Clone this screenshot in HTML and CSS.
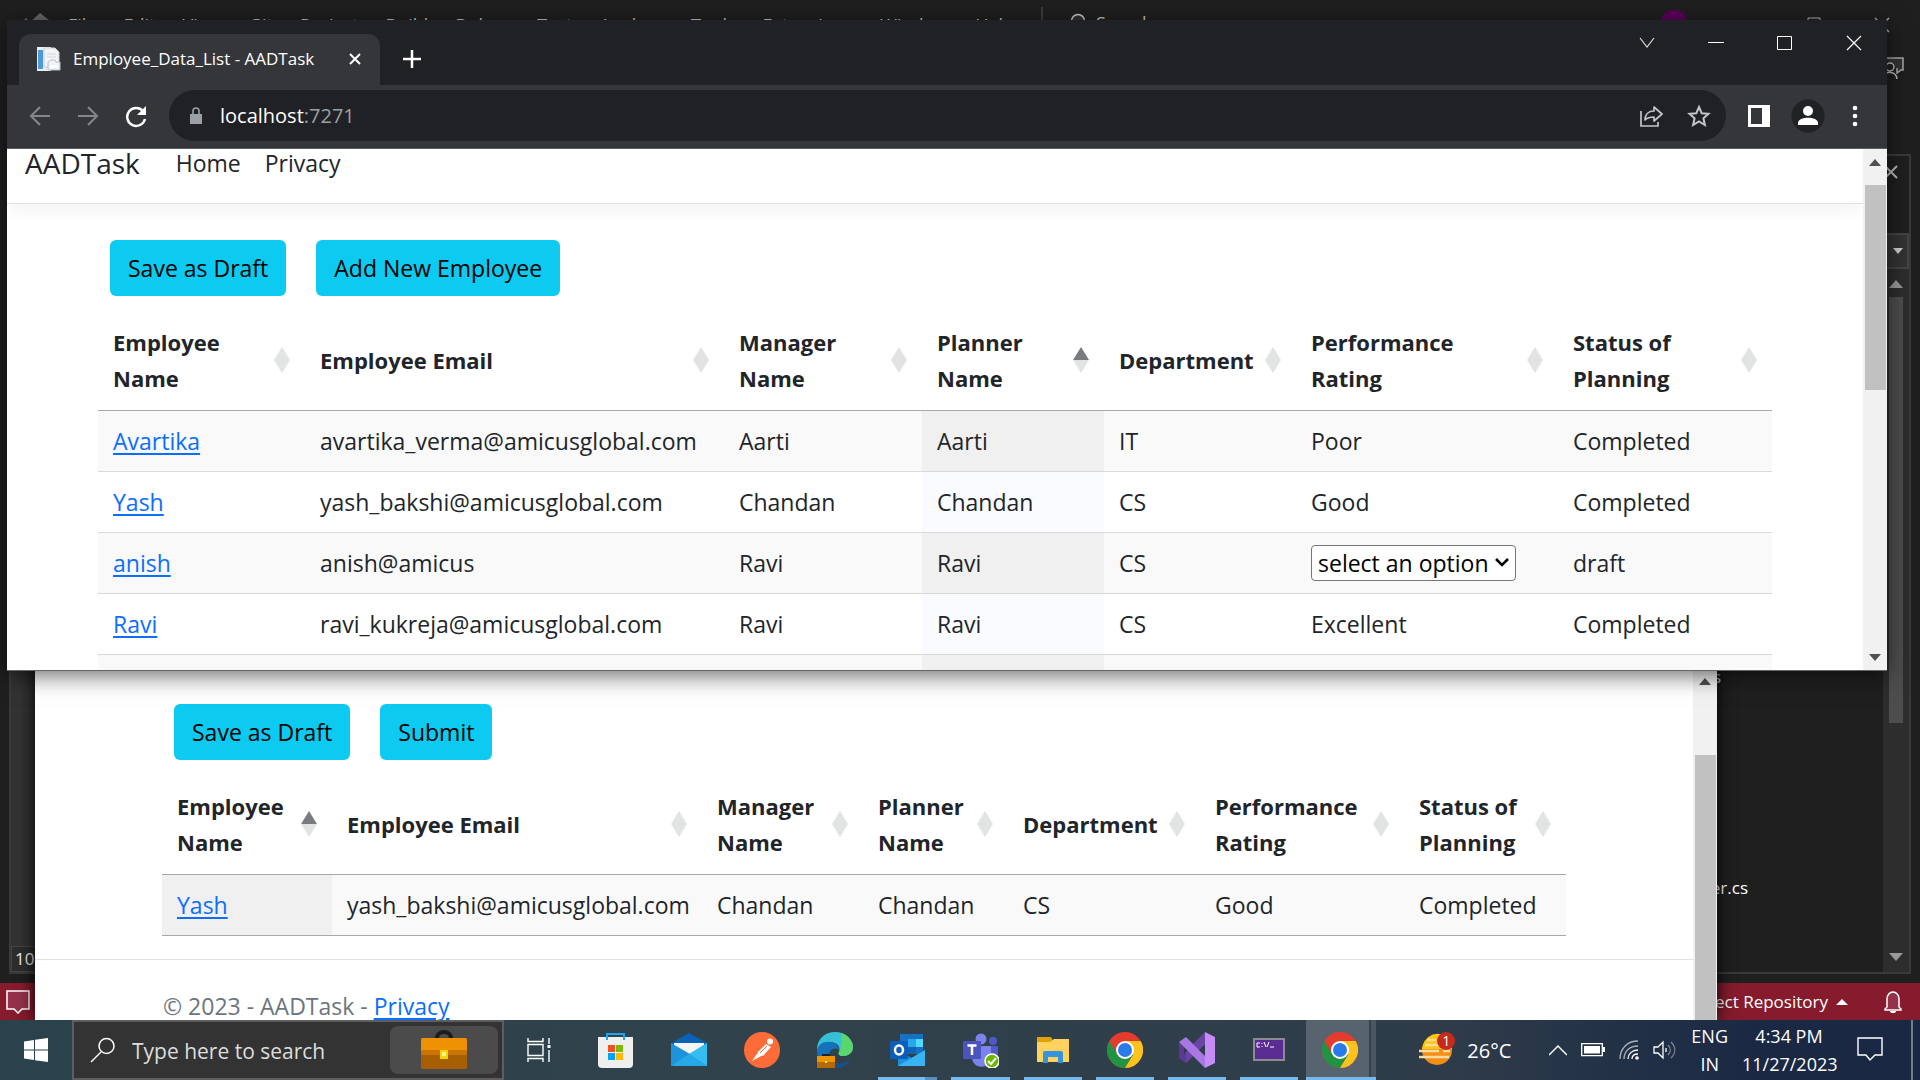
FILE: index.html
```html
<!DOCTYPE html>
<html lang="en">
<head>
<meta charset="utf-8">
<title>Employee_Data_List - AADTask</title>
<link rel="stylesheet" href="styles.css">
</head>
<body>
<div class="desktop">

  <!-- Editor window behind everything -->
  <section class="ide" aria-label="Editor">
    <header class="ide-menu">
      <svg class="ide-logo" width="32" height="24" viewBox="0 0 32 24"><path d="M0 10l6-5 4 4 10-9 9 7v17H0z" fill="#6a6a6a"/></svg>
      <span>File</span><span>Edit</span><span>View</span><span>Git</span><span>Project</span><span>Build</span><span>Debug</span><span>Test</span><span>Analyze</span><span>Tools</span><span>Extensions</span><span>Window</span><span>Help</span>
      <i class="ide-sep"></i>
      <svg class="ide-lens" width="16" height="22" viewBox="0 0 16 22"><circle cx="8" cy="8" r="6.500" fill="#333" stroke="#c8c8c8" stroke-width="1.500"/></svg>
      <span class="ide-search">Search</span>
      <span class="ide-name">AADTask</span>
      <i class="ide-avatar"></i>
      <svg class="ide-max" width="14" height="14" viewBox="0 0 14 14"><path d="M1 1h12v12H1z" fill="none" stroke="#bbb"/></svg>
      <svg class="ide-close" width="16" height="16" viewBox="0 0 16 16"><path d="M1 1l14 14M15 1L1 15" fill="none" stroke="#aaa" stroke-width="1.500"/></svg>
    </header>
    <svg class="ide-feedback" width="24" height="24" viewBox="0 0 24 24"><path d="M3 2h19v12h-2l-4 3v-5" fill="#333" stroke="#aaa" stroke-width="1.500"/><circle cx="9" cy="11" r="4" fill="#222" stroke="#bbb" stroke-width="1.500"/><path d="M2 23c0-9 13-9 14 0" fill="none" stroke="#bbb" stroke-width="1.500"/></svg>
    <div class="ide-body">
      <div class="ide-left"><div class="ide-zoom">102%</div></div>
      <div class="ide-right">
        <div class="ide-files"><span>Controllers</span><span>HomeController.cs</span></div>
        <div class="ide-side">
          <svg class="ide-x" width="16" height="16" viewBox="0 0 16 16"><path d="M2 2l12 12M14 2L2 14" stroke="#bbb" stroke-width="2"/></svg>
          <div class="ide-combo"><svg width="10" height="6" viewBox="0 0 10 6"><path d="M0 0h10L5 6z" fill="#ccc"/></svg></div>
          <div class="ide-scroll">
            <svg width="14" height="8" viewBox="0 0 14 8"><path d="M0 8h14L7 0z" fill="#999"/></svg>
            <i></i>
            <svg width="14" height="8" viewBox="0 0 14 8"><path d="M0 0h14L7 8z" fill="#999"/></svg>
          </div>
        </div>
      </div>
    </div>
    <footer class="ide-status">
      <svg width="24" height="24" viewBox="0 0 24 24"><path d="M1 1h22v18h-7l-4 4-4-4H1z" fill="#93324a" stroke="#fff" stroke-width="1.500"/></svg>
      <span class="ide-repo">Select Repository</span>
      <svg width="12" height="6" viewBox="0 0 12 6"><path d="M0 6h12L6 0z" fill="#fff"/></svg>
      <svg class="ide-bell" width="18" height="22" viewBox="0 0 18 22"><path d="M3 16V8a6 7 0 0 1 12 0v8l2 2v1H1v-1z" fill="#93324a" stroke="#fff" stroke-width="1.500"/><path d="M6 20a3 2 0 0 0 6 0" fill="#fff"/></svg>
    </footer>
  </section>

  <!-- Second browser window -->
  <section class="window back" aria-label="Employee planning">
    <div class="page">
      <main class="content">
        <div class="actions"><button class="btn">Save as Draft</button><button class="btn">Submit</button></div>
        <table class="grid">
          <colgroup><col class="b1"><col class="b2"><col class="b3"><col class="b4"><col class="b5"><col class="b6"><col class="b7"></colgroup>
          <thead><tr>
            <th class="asc"><div>Employee<br>Name<i></i></div></th>
            <th><div>Employee Email<i></i></div></th>
            <th><div>Manager<br>Name<i></i></div></th>
            <th><div>Planner<br>Name<i></i></div></th>
            <th><div>Department<i></i></div></th>
            <th><div>Performance<br>Rating<i></i></div></th>
            <th><div>Status of<br>Planning<i></i></div></th>
          </tr></thead>
          <tbody>
            <tr><td class="sorted"><a href="#yash">Yash</a></td><td>yash_bakshi@amicusglobal.com</td><td>Chandan</td><td>Chandan</td><td>CS</td><td>Good</td><td>Completed</td></tr>
          </tbody>
        </table>
      </main>
      <footer class="footer">© 2023 - AADTask - <a href="#privacy">Privacy</a></footer>
    </div>
    <div class="scrollbar"><i class="up"></i><i class="thumb"></i></div>
  </section>

  <!-- Front browser window -->
  <section class="window front" aria-label="Employee data list">
    <div class="tabs">
      <div class="tab">
        <svg width="24" height="24" viewBox="0 0 24 24"><path d="M0 0h14v24H0z" fill="#e8eef4"/><path d="M1 3h5v19H1z" fill="#4a9bd8"/><path d="M7 1h11l4 4v15H7z" fill="#f4f4f6" stroke="#c9ced4"/><path d="M10 7h9M10 10h9" stroke="#cfd4da"/><path d="M11 15l3-2h4l1 2h4v8H11z" fill="#eef1f5" stroke="#b9c2cc"/><path d="M13 18h8v3h-8z" fill="#fff"/></svg>
        <span>Employee_Data_List - AADTask</span>
        <svg width="14" height="14" viewBox="0 0 14 14"><path d="M2 2l10 10M12 2L2 12" stroke="#fff" stroke-width="2"/></svg>
      </div>
      <svg class="newtab" width="18" height="18" viewBox="0 0 18 18"><path d="M9 0v18M0 9h18" stroke="#fff" stroke-width="2.500"/></svg>
      <div class="controls">
        <svg width="16" height="16" viewBox="0 0 16 16"><path d="M1 3l7 9 7-9" fill="none" stroke="#ddd" stroke-width="1.200"/></svg>
        <svg width="16" height="16" viewBox="0 0 16 16"><path d="M0 7.500h16" stroke="#fff"/></svg>
        <svg width="16" height="16" viewBox="0 0 16 16"><path d="M.5 1.500h14v13H.5z" fill="none" stroke="#fff"/></svg>
        <svg width="16" height="16" viewBox="0 0 16 16"><path d="M1 1l14 14M15 1L1 15" stroke="#fff" stroke-width="1.200"/></svg>
      </div>
    </div>
    <div class="toolbar">
      <svg width="24" height="24" viewBox="0 0 24 24"><path d="M22 12H3M12 3l-9 9 9 9" fill="none" stroke="#85868a" stroke-width="2"/></svg>
      <svg width="24" height="24" viewBox="0 0 24 24"><path d="M2 12h19M12 3l9 9-9 9" fill="none" stroke="#85868a" stroke-width="2"/></svg>
      <svg width="24" height="24" viewBox="0 0 24 24"><path d="M19 7a9 9 0 1 0 2 8" fill="none" stroke="#fff" stroke-width="2.400"/><path d="M22 2v9h-9z" fill="#fff"/></svg>
      <div class="omnibox">
        <svg width="14" height="18" viewBox="0 0 14 18"><path d="M1 7h12v10H1z" fill="#9aa0a6"/><path d="M4 8V4a3 3 0 0 1 6 0v4" fill="none" stroke="#9aa0a6" stroke-width="1.600"/></svg>
        <span class="url">localhost<span>:7271</span></span>
        <svg width="24" height="24" viewBox="0 0 24 24"><path d="M2 7v15h17v-4M2 7" fill="none" stroke="#c4c5c8" stroke-width="1.700"/><path d="M6 16c0-6 4-9 9-9V3l8 7-8 7v-4c-4 0-7 1-9 3z" fill="none" stroke="#c4c5c8" stroke-width="1.700" stroke-linejoin="round"/></svg>
        <svg width="24" height="24" viewBox="0 0 24 24"><path d="M12 3l2.700 6.200 6.800.6-5.100 4.500 1.500 6.700-5.900-3.500L6.100 21l1.500-6.700-5.100-4.500 6.800-.6z" fill="none" stroke="#c4c5c8" stroke-width="2"/></svg>
      </div>
      <svg width="22" height="22" viewBox="0 0 22 22"><path d="M0 0h22v22H0z" fill="#fff"/><path d="M3 3h11v16H3z" fill="#35363a"/></svg>
      <svg class="profile" width="34" height="34" viewBox="0 0 34 34"><circle cx="17" cy="17" r="16.500" fill="#202124"/><circle cx="17" cy="12" r="5" fill="#fff"/><path d="M7 26v-2c0-7 20-7 20 0v2z" fill="#fff"/></svg>
      <svg width="6" height="22" viewBox="0 0 6 22"><g fill="#fff"><circle cx="3" cy="3" r="2.300"/><circle cx="3" cy="11" r="2.300"/><circle cx="3" cy="19" r="2.300"/></g></svg>
    </div>
    <div class="view">
      <div class="page">
        <nav class="nav"><a class="brand" href="#top">AADTask</a><a href="#home">Home</a><a href="#privacy">Privacy</a></nav>
        <main class="content">
          <div class="actions"><button class="btn">Save as Draft</button><button class="btn">Add New Employee</button></div>
          <table class="grid">
            <colgroup><col class="f1"><col class="f2"><col class="f3"><col class="f4"><col class="f5"><col class="f6"><col class="f7"></colgroup>
            <thead><tr>
              <th><div>Employee<br>Name<i></i></div></th>
              <th><div>Employee Email<i></i></div></th>
              <th><div>Manager<br>Name<i></i></div></th>
              <th class="asc"><div>Planner<br>Name<i></i></div></th>
              <th><div>Department<i></i></div></th>
              <th><div>Performance<br>Rating<i></i></div></th>
              <th><div>Status of<br>Planning<i></i></div></th>
            </tr></thead>
            <tbody>
              <tr><td><a href="#avartika">Avartika</a></td><td>avartika_verma@amicusglobal.com</td><td>Aarti</td><td class="sorted">Aarti</td><td>IT</td><td>Poor</td><td>Completed</td></tr>
              <tr><td><a href="#yash">Yash</a></td><td>yash_bakshi@amicusglobal.com</td><td>Chandan</td><td class="sorted">Chandan</td><td>CS</td><td>Good</td><td>Completed</td></tr>
              <tr><td><a href="#anish">anish</a></td><td>anish@amicus</td><td>Ravi</td><td class="sorted">Ravi</td><td>CS</td><td class="pick"><div class="select"><select aria-label="Performance Rating"><option>select an option</option><option>Excellent</option><option>Good</option><option>Poor</option></select><svg width="14" height="10" viewBox="0 0 14 10"><path d="M1 1l6 6 6-6" fill="none" stroke="#000" stroke-width="2.500"/></svg></div></td><td>draft</td></tr>
              <tr><td><a href="#ravi">Ravi</a></td><td>ravi_kukreja@amicusglobal.com</td><td>Ravi</td><td class="sorted">Ravi</td><td>CS</td><td>Excellent</td><td>Completed</td></tr>
              <tr><td>&nbsp;</td><td></td><td></td><td class="sorted"></td><td></td><td></td><td></td></tr>
            </tbody>
          </table>
        </main>
      </div>
      <div class="scrollbar"><i class="up"></i><i class="thumb"></i><i class="down"></i></div>
    </div>
  </section>

  <!-- Taskbar -->
  <footer class="taskbar">
    <button class="start" aria-label="Start"><svg width="24" height="24" viewBox="0 0 24 24"><path d="M0 3.500l10-1.500v9.500H0zM11 1.800L24 0v11.500H11zM0 12.500h10V22L0 20.500zM11 12.500h13V24l-13-1.800z" fill="#fff"/></svg></button>
    <div class="search">
      <svg width="26" height="26" viewBox="0 0 26 26"><circle cx="16.500" cy="9" r="7.500" fill="none" stroke="#fff" stroke-width="1.500"/><path d="M11 15L1 25" stroke="#fff" stroke-width="1.500"/></svg>
      <input type="text" aria-label="Search" placeholder="Type here to search">
      <span class="highlight"><svg width="46" height="40" viewBox="0 0 46 40"><path d="M16 8c0-8 14-8 14 0" fill="none" stroke="#1c1c1c" stroke-width="4"/><rect y="8" width="46" height="31" rx="2" fill="#a85f04"/><path d="M2 8h42a2 2 0 0 1 2 2v15H0V10a2 2 0 0 1 2-2z" fill="#ee9102"/><path d="M0 20h46v5H0z" fill="#c97405"/><path d="M19 20h8v9h-8z" fill="#f2d500"/><path d="M21 22h4v4h-4z" fill="#fff48a"/></svg></span>
    </div>
    <div class="apps">
      <button class="app view-btn" aria-label="Task view"><svg width="26" height="24" viewBox="0 0 26 24"><path d="M2 0v3.500h15V0M2 24v-3.500h15V24M2 6.500h15v11H2zM23 0v6M23 12v12" fill="none" stroke="#fff" stroke-width="1.400"/><path d="M21.500 7h3v3h-3z" fill="#fff"/></svg></button>
      <button class="app" aria-label="Store"><svg width="36" height="36" viewBox="0 0 36 36"><path d="M9 7V2h17v5" fill="none" stroke="#1fa5ee" stroke-width="2"/><path d="M0 5h35v27a4 4 0 0 1-4 4H4a4 4 0 0 1-4-4z" fill="#efefef"/><path d="M9 5v3M26 5v3" stroke="#1fa5ee" stroke-width="2"/><path d="M10 13h7v7h-7z" fill="#f25022"/><path d="M18 13h7v7h-7z" fill="#7fba00"/><path d="M10 21h7v7h-7z" fill="#00a4ef"/><path d="M18 21h7v7h-7z" fill="#ffb900"/></svg></button>
      <button class="app" aria-label="Mail"><svg width="36" height="36" viewBox="0 0 36 36"><path d="M0 11L18 1l18 10v4H0z" fill="#0a61b5"/><path d="M3 11h30v10l-15 8L3 21z" fill="#f4f4f4"/><path d="M0 11l19 11 17-11v23H0z" fill="#1b93dd"/><path d="M18 22l18-11v23z" fill="#35bdf1"/><path d="M0 34l18-12 18 12z" fill="#27a9e8"/></svg></button>
      <button class="app" aria-label="Postman"><svg width="36" height="36" viewBox="0 0 36 36"><circle cx="18" cy="18" r="18" fill="#ff6c37"/><circle cx="26" cy="9.500" r="3" fill="#fff"/><path d="M22 12l5 3-8 9-5-4z" fill="#fff"/><path d="M15 19l4 4-11 6z" fill="#fff"/><path d="M23 14l-7 7" stroke="#ff6c37"/></svg></button>
      <button class="app" aria-label="Edge"><svg width="36" height="36" viewBox="0 0 36 36"><path d="M0 20C-1 7 8 0 18 0c11 0 18 8 18 15 0 6-5 9-10 9-4 0-5-2-4-4 2-6-3-10-9-10C6 10 0 15 0 20z" fill="#35c1d8"/><path d="M24 1c8 2 12 9 12 14 0 6-5 9-10 9-4 0-5-2-4-4 3-6 3-13 2-19z" fill="#5bd66c"/><path d="M0 20C0 13 6 9 13 10c5 0 9 4 9 8-5-4-12 1-9 8 3 7 13 8 20 2-4 6-10 8-15 8C7 36 0 29 0 20z" fill="#1671bd"/><path d="M13 26c3 7 13 8 20 2-4 6-10 8-15 8z" fill="#124f96"/><path d="M6 25v-2h6v2" stroke="#222" stroke-width="2" fill="none"/><path d="M0 24h18v12H0z" fill="#b66904"/><path d="M0 24h18v6H0z" fill="#ef9505"/><path d="M8 29h2v2H8z" fill="#fff27a"/></svg></button>
      <button class="app run multi" aria-label="Outlook"><svg width="36" height="36" viewBox="0 0 36 36"><path d="M10 2h23v20H10z" fill="#1471c4"/><path d="M18 7h8v8h-8z" fill="#28a8ea"/><path d="M26 7h7v8h-7z" fill="#50d9ff"/><path d="M18 15h8v7h-8z" fill="#0f63b0"/><path d="M8 19l14 7 13-8v16H8z" fill="#1a8fe0"/><path d="M8 34l27-16v16z" fill="#38b4f0"/><rect y="9" width="18" height="18" rx="1" fill="#0c5fb8"/><ellipse cx="9" cy="18" rx="4" ry="4.500" fill="none" stroke="#fff" stroke-width="2.500"/></svg></button>
      <button class="app run" aria-label="Teams"><svg width="36" height="36" viewBox="0 0 36 36"><circle cx="18" cy="7" r="5.500" fill="#7b83eb"/><circle cx="30" cy="9" r="4" fill="#5059c9"/><path d="M24 14h11v11a6 6 0 0 1-11 4z" fill="#5059c9"/><path d="M9 14h19v11c0 13-19 13-19 0z" fill="#7b83eb"/><rect y="9" width="18" height="18" rx="1" fill="#4b53bc"/><path d="M4.500 13.500h9M9 13.500V23" stroke="#fff" stroke-width="2.500"/><circle cx="29" cy="29" r="7" fill="#6bb700" stroke="#fff" stroke-width="1.500"/><path d="M25 29l3 3 5-6" fill="none" stroke="#fff" stroke-width="2"/></svg></button>
      <button class="app run" aria-label="File Explorer"><svg width="36" height="36" viewBox="0 0 36 36"><path d="M2 5h14l2 4v6H2z" fill="#e0a10b"/><path d="M2 10h13l4-3h15v23H2z" fill="#ffd35e"/><path d="M8 31V21a2 2 0 0 1 2-2h16a2 2 0 0 1 2 2v10h-5v-6H13v6z" fill="#3394dd"/></svg></button>
      <button class="app run" aria-label="Chrome"><svg width="36" height="36" viewBox="0 0 36 36"><circle cx="18" cy="18" r="18" fill="#e33b2e"/><path d="M2.400 9A18 18 0 0 0 18 36l9-13.500L10 22z" fill="#229342"/><path d="M18 9h15.600A18 18 0 0 1 18 36l8-13z" fill="#fcc31e"/><circle cx="18" cy="18" r="9" fill="#fff"/><circle cx="18" cy="18" r="7" fill="#2a7bea"/></svg></button>
      <button class="app run" aria-label="Visual Studio"><svg width="36" height="36" viewBox="0 0 36 36"><path d="M26 0v13L7 31l-7-5z" fill="#6b45a3"/><path d="M0 10l7-4v25l-7-5z" fill="#5c3a93"/><path d="M5 14v8l4-4z" fill="#2e3b48"/><path d="M0 10l7-5 20 20-1 11z" fill="#a877e4"/><path d="M26 0l10 5v26l-10 5z" fill="#c58cf5"/><path d="M26 13v10l-6-5z" fill="#2e3b48"/></svg></button>
      <button class="app run" aria-label="Command prompt"><svg width="36" height="36" viewBox="0 0 36 36"><path d="M2 6h32v23H2z" fill="#8b8b94"/><path d="M4 8h28v19H4z" fill="#5a2b91"/><path d="M9 11H6v4h3M11 11v1M11 14v1M13 10l2 5M16 15l2-5M19 15h4" fill="none" stroke="#fff"/></svg></button>
      <button class="app run active" aria-label="Chrome"><svg width="36" height="36" viewBox="0 0 36 36"><circle cx="18" cy="18" r="18" fill="#e33b2e"/><path d="M2.400 9A18 18 0 0 0 18 36l9-13.500L10 22z" fill="#229342"/><path d="M18 9h15.600A18 18 0 0 1 18 36l8-13z" fill="#fcc31e"/><circle cx="18" cy="18" r="9" fill="#fff"/><circle cx="18" cy="18" r="7" fill="#2a7bea"/></svg></button>
    </div>
    <div class="tray">
      <div class="weather"><svg width="36" height="36" viewBox="0 0 36 36"><circle cx="18" cy="17" r="15" fill="#f58f12"/><path d="M4 12a15 15 0 0 1 29 0v4H3z" fill="#ffc60a"/><path d="M8 7h9M6 12h17M0 18h20M24 18h7M0 24h30" stroke="#f4dca6" stroke-width="2.500"/></svg><b>1</b><span>26°C</span></div>
      <svg width="18" height="12" viewBox="0 0 18 12"><path d="M0 11l9-9 9 9" fill="none" stroke="#fff" stroke-width="1.500"/></svg>
      <svg width="24" height="14" viewBox="0 0 24 14"><path d="M.7.700h20.600v12H.7z" fill="none" stroke="#fff" stroke-width="1.300"/><path d="M3 3h16v7.500H3zM22 4h2v5h-2z" fill="#fff"/></svg>
      <svg width="20" height="20" viewBox="0 0 20 20"><g fill="none" stroke="#fff" stroke-width="1.300"><path d="M1 19C1 9 8 1 19 1M5 19C5 11 11 6 19 6" stroke="#aab2bb"/><path d="M9 19c0-5 4-9 10-9M13 19c0-3 2-5 6-5"/></g><circle cx="18" cy="18" r="1.800" fill="#fff"/></svg>
      <svg width="24" height="20" viewBox="0 0 24 20"><path d="M1 7h4l5-5v16l-5-5H1zM13 8v4" fill="none" stroke="#fff" stroke-width="1.300"/><path d="M15 5c3 3 3 7 0 10M18 2c5 5 5 11 0 16" fill="none" stroke="#7e8894" stroke-width="1.300"/></svg>
      <div class="stack lang"><span>ENG</span><span>IN</span></div>
      <div class="stack clock"><span>4:34 PM</span><span>11/27/2023</span></div>
      <svg class="note" width="26" height="26" viewBox="0 0 26 26"><path d="M1 1h24v17h-7l-5 5-4-5H1z" fill="none" stroke="#fff" stroke-width="1.400"/></svg>
    </div>
  </footer>
</div>
</body>
</html>
```
FILE: styles.css
```css
* { box-sizing: border-box; }
body { margin: 0; background: #1f1f1f; color: #212529; font: 23px/36px "Open Sans", "Noto Sans", sans-serif; }
svg { display: block; flex: none; }
button, input, select { font: inherit; }
button { border: 0; padding: 0; background: none; }
a { color: #0d6efd; text-underline-offset: 3px; }

.desktop { position: relative; height: 100vh; overflow: hidden; display: flex; flex-direction: column; }

/* Editor */
.ide { position: relative; flex: 1; min-height: 0; display: flex; flex-direction: column; background: #1f1f1f; color: #ddd; font-size: 17px; line-height: 24px; }
.ide-menu { display: flex; align-items: flex-start; gap: 27px; height: 154px; padding: 13px 30px 0 20px; color: #c8c8c8; font-size: 18px; }
.ide-logo { margin-right: -11px; }
.ide-sep { width: 2px; height: 30px; margin-top: -6px; background: #3d3d3d; }
.ide-lens { margin-right: -17px; }
.ide-search { margin: -2px 84px 0 0; }
.ide-name { margin-top: 2px; }
.ide-avatar { width: 28px; height: 28px; margin: -3px 0 0 auto; border-radius: 50%; background: #5c005c; }
.ide-max { margin: 4px 26px 0 92px; }
.ide-close { margin-top: 4px; }
.ide-feedback { position: absolute; right: 15px; top: 56px; }
.ide-body { flex: 1; min-height: 0; display: flex; justify-content: space-between; margin: 0 9px 9px; border: 2px solid #3a3a3a; }
.ide-left { display: flex; flex-direction: column; justify-content: flex-end; width: 120px; background: #333; }
.ide-zoom { padding: 0 3px; border: 1px solid #444; background: #2d2d2d; color: #eee; }
.ide-right { display: flex; }
.ide-files { display: flex; flex-direction: column; justify-content: flex-end; gap: 187px; padding: 0 135px 72px 0; text-align: right; color: #fff; }
.ide-files span:first-child { padding-right: 27px; }
.ide-side { display: flex; flex-direction: column; width: 26px; }
.ide-x { margin: 8px 0 0; }
.ide-combo { display: grid; place-items: center; height: 36px; margin-top: 53px; padding-left: 4px; border: 2px solid #444; background: #333; }
.ide-scroll { flex: 1; display: flex; flex-direction: column; align-items: center; padding: 11px 0; background: #2d2d2d; }
.ide-scroll i { flex: 0 1 426px; width: 14px; margin: 9px 0 auto; background: #4d4d4d; }
.ide-status { display: flex; align-items: center; gap: 8px; height: 37px; padding: 0 18px 0 6px; background: #861b2d; color: #fff; }
.ide-repo { margin-left: auto; }
.ide-bell { margin-left: 28px; }

/* Browser windows */
.window { position: absolute; display: flex; overflow: hidden; background: #fff; }
.back { left: 35px; right: 203px; top: 600px; bottom: 60px; box-shadow: 0 0 16px #000; }
.front { left: 7px; right: 33px; top: 20px; bottom: 409px; flex-direction: column; background: #202124; border-bottom: 1px solid #666; box-shadow: 0 4px 22px rgba(0, 0, 0, .6); }
.tabs { display: flex; align-items: flex-end; height: 65px; padding-left: 12px; }
.tab { display: flex; align-items: center; gap: 12px; width: 361px; height: 51px; padding: 0 18px 2px; border-radius: 12px 12px 0 0; background: #35363a; color: #fff; font-size: 17px; }
.tab span { flex: 1; white-space: nowrap; }
.newtab { margin: 0 0 17px 23px; }
.controls { display: flex; gap: 53px; margin: 0 25px 34px auto; }
.toolbar { display: flex; align-items: center; gap: 24px; height: 64px; padding: 0 29px 2px 21px; border-bottom: 1px solid #5b5c60; background: #35363a; }
.omnibox { flex: 1; display: flex; align-items: center; gap: 24px; height: 51px; margin: 0 -2px 0 -3px; padding: 0 15px 0 20px; border-radius: 26px; background: #202124; }
.omnibox svg:first-child { margin-right: -7px; }
.profile { margin: 0 3px 0 -3px; }
.url { flex: 1; color: #fff; font-size: 20px; }
.url span { color: #9aa0a6; }
.view { flex: 1; min-height: 0; display: flex; background: #fff; }
.page { flex: 1; min-width: 0; overflow: hidden; }
.nav { display: flex; align-items: center; gap: 24px; height: 55px; padding: 0 18px 26px; border-bottom: 1px solid #dee2e6; box-shadow: 0 6px 18px rgba(0, 0, 0, .05); line-height: 28px; }
.nav a { color: #212529; text-decoration: none; }
.nav .brand { margin-right: 12px; font-size: 28px; }
.content { padding: 36px 91px 0; }
.back .content { padding: 104px 127px 23px; }
.actions { display: flex; gap: 30px; padding: 0 12px 14px; }
.btn { height: 56px; padding: 0 18px; border-radius: 6px; background: #0dcaf0; color: #000; }

.grid { width: 100%; border-collapse: separate; border-spacing: 0; table-layout: fixed; border-bottom: 1px solid #a9a9a9; }
.grid th { height: 101px; padding: 0 15px; border-bottom: 1px solid #a9a9a9; text-align: left; font-size: 22px; font-weight: 700; white-space: nowrap; }
.grid th div { position: relative; }
.grid th i { position: absolute; right: 0; top: calc(50% - 13px); width: 16px; height: 26px; background: #e2e4e4; clip-path: polygon(50% 0, 100% 50%, 50% 100%, 0 50%); }
.grid .asc i { background: linear-gradient(#797b7e 50%, #e2e4e4 50%); }
.grid td { height: 61px; padding: 12px 15px; border-top: 1px solid #d9d9d9; white-space: nowrap; }
.grid tbody tr:first-child td { height: 60px; border-top: 0; }
.grid tr:nth-child(odd) td { background: #f9f9f9; }
.grid tr:nth-child(odd) .sorted { background: #f0f0f0; }
.grid tr:nth-child(even) .sorted { background: #fafbff; }
.grid .pick { padding-block: 0; }
.select { display: grid; align-items: center; width: 205px; }
.select select { grid-area: 1 / 1; width: 100%; height: 36px; padding: 0 6px; border: 1px solid #767676; border-radius: 4px; background: #fff; color: #000; line-height: 34px; appearance: none; }
.select svg { grid-area: 1 / 1; justify-self: end; margin-right: 7px; pointer-events: none; }
.f1 { width: 207px; } .f2 { width: 419px; } .f3 { width: 198px; } .f4 { width: 182px; } .f5 { width: 192px; } .f6 { width: 262px; } .f7 { width: 214px; }
.b1 { width: 170px; } .b2 { width: 370px; } .b3 { width: 161px; } .b4 { width: 145px; } .b5 { width: 192px; } .b6 { width: 204px; } .b7 { width: 162px; }

.footer { padding: 32px 128px 0; border-top: 1px solid #dee2e6; color: #6c757d; line-height: 28px; }

.scrollbar { display: flex; flex-direction: column; align-items: center; width: 24px; background: #f1f1f1; }
.up, .down { width: 12px; height: 7px; background: #505050; }
.up { margin: 10px 0 19px; clip-path: polygon(50% 0, 100% 100%, 0 100%); }
.down { margin: auto 0 9px; clip-path: polygon(0 0, 100% 0, 50% 100%); }
.thumb { width: 21px; height: 205px; background: #c1c1c1; }
.back .up { margin: 78px 0 70px; }
.back .thumb { flex: 1; }

/* Taskbar */
.taskbar { position: relative; display: flex; height: 60px; background: linear-gradient(90deg, #2a424c, #31424b 40%, #2e3c4a 75%, #1a2844 92%); color: #fff; }
.start { display: grid; place-items: center; width: 72px; }
.search { display: flex; align-items: center; width: 432px; border: 2px solid #5e5e5e; padding: 0 4px 0 16px; background: #333; }
.search input { flex: 1; min-width: 0; padding: 2px 0 0 16px; border: 0; background: none; color: #ddd; font-size: 21px; }
.search input::placeholder { color: #ddd; opacity: 1; }
.highlight { display: grid; place-items: center; width: 108px; height: 48px; border-radius: 8px; background: #4b4b4b; }
.apps { display: flex; gap: 14px; padding-left: 5px; }
.app { display: grid; place-items: center; width: 59px; border-bottom: 3px solid transparent; padding-top: 3px; }
.view-btn { margin-right: 4px; }
.run { border-color: #76b9ed; width: 58px; }
.multi, .multi + .run { width: 59px; }
.multi { border-image: linear-gradient(90deg, #76b9ed 76%, #5b8fb9 76%) 3; border-width: 0 0 3px; }
.active { width: 70px; margin-left: -6px; padding-right: 2px; background: linear-gradient(90deg, #57636f 63px, #35424e 63px, #35424e 65px, #4a5662 65px); }
.tray { display: flex; align-items: center; gap: 14px; margin-left: auto; padding-right: 7px; font-size: 18px; }
.weather { position: relative; display: flex; align-items: center; gap: 12px; margin-right: 24px; padding-top: 2px; font-size: 20px; }
.weather b { position: absolute; left: 18px; top: 1px; width: 18px; height: 18px; border-radius: 50%; background: #c42b1c; font: 14px/18px "Open Sans", sans-serif; text-align: center; }
.stack { display: flex; flex-direction: column; text-align: center; line-height: 28px; }
.clock { width: 94px; }
.note { margin: 0 0 0 7px; }
.tray::after { content: ""; width: 2px; height: 60px; margin-left: 14px; background: #747b8c; }
```
